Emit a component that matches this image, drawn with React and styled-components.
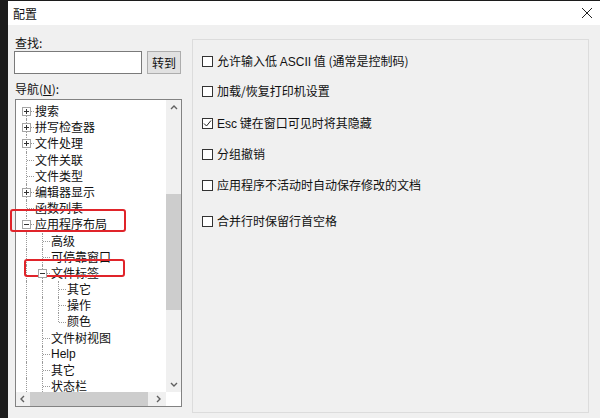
import React from "react";
import styled, { createGlobalStyle } from "styled-components";

const GlobalStyle = createGlobalStyle`
  html, body {
    margin: 0;
    padding: 0;
    background: #1c1c1c;
    overflow: hidden;
  }
  #root {
    width: 600px;
    height: 418px;
  }
`;

const FONT = `"Noto Sans CJK SC", "Noto Sans", sans-serif`;

const Desktop = styled.div`
  display: flex;
  width: 600px;
  height: 418px;
  padding: 1px 0 0 8px;
  box-sizing: border-box;
  background: #1c1c1c;
`;

const Window = styled.div`
  flex: 1;
  display: flex;
  flex-direction: column;
  background: #f0f0f0;
  font-family: ${FONT};
  font-size: 12px;
  color: #111;
  position: relative;
`;

const TitleBar = styled.div`
  height: 24px;
  display: flex;
  align-items: center;
  justify-content: space-between;
  background: #fff;
  padding: 0 6px 0 5px;
  font-size: 12px;
`;

const CloseBtn = styled.div`
  width: 14px;
  height: 14px;
  display: flex;
  align-items: center;
  justify-content: center;
`;

const Body = styled.div`
  flex: 1;
  display: flex;
  gap: 10px;
  padding: 9px 11px 0 6px;
`;

const LeftCol = styled.div`
  width: 168px;
  display: flex;
  flex-direction: column;
`;

const Label = styled.div`
  height: 17px;
  line-height: 17px;
  margin-top: ${(p) => p.$top || 0}px;
  padding-left: 1px;
  u {
    text-decoration: underline;
  }
`;

const SearchRow = styled.div`
  display: flex;
  gap: 5px;
  height: 23px;
`;

const Input = styled.div`
  width: 128px;
  box-sizing: border-box;
  border: 1px solid #7a7a7a;
  background: #fff;
`;

const Button = styled.div`
  width: 34px;
  box-sizing: border-box;
  border: 1px solid #adadad;
  background: #e1e1e1;
  display: flex;
  align-items: center;
  justify-content: center;
`;

const TreeBox = styled.div`
  margin-top: 2px;
  margin-left: 1px;
  height: 308px;
  box-sizing: border-box;
  border: 1px solid #828282;
  background: #fff;
  display: grid;
  grid-template-columns: 1fr 15px;
  grid-template-rows: 1fr 14px;
  overflow: hidden;
`;

const TreeList = styled.div`
  padding: 3px 0 0 2px;
  overflow: hidden;
`;

const TreeRow = styled.div`
  display: flex;
  height: 16.2px;
  line-height: 16.2px;
  white-space: nowrap;
`;

const Guide = styled.div`
  width: 16px;
  height: 100%;
  flex: none;
  position: relative;
  &::before {
    content: "";
    display: ${(p) => (p.$v ? "block" : "none")};
    position: absolute;
    left: 8px;
    top: ${(p) => (p.$v === "bottom" ? "50%" : "0")};
    bottom: ${(p) => (p.$v === "top" ? "50%" : "0")};
    border-left: 1px dotted #9a9a9a;
  }
  &::after {
    content: "";
    display: ${(p) => (p.$h ? "block" : "none")};
    position: absolute;
    left: 9px;
    right: 0;
    top: 50%;
    border-top: 1px dotted #9a9a9a;
  }
`;

const Expander = styled.div`
  position: absolute;
  left: 4px;
  top: 4px;
  width: 9px;
  height: 9px;
  box-sizing: border-box;
  border: 1px solid #a5a5a5;
  background: #fff;
  z-index: 1;
  &::before {
    content: "";
    position: absolute;
    left: 1px;
    right: 1px;
    top: 3px;
    border-top: 1px solid #333;
  }
  &::after {
    content: "";
    display: ${(p) => (p.$open ? "none" : "block")};
    position: absolute;
    top: 1px;
    bottom: 1px;
    left: 3px;
    border-left: 1px solid #333;
  }
`;

const ItemText = styled.span`
  padding-left: 1px;
  font-family: ${(p) => (p.$latin ? `"Liberation Sans", ${FONT}` : FONT)};
`;

const VScroll = styled.div`
  background: #f0f0f0;
  display: flex;
  flex-direction: column;
  align-items: center;
`;

const HScroll = styled.div`
  background: #f0f0f0;
  display: flex;
  align-items: center;
`;

const Corner = styled.div`
  background: #fff;
`;

const Arrow = styled.div`
  width: ${(p) => (p.$h ? "14px" : "15px")};
  height: ${(p) => (p.$h ? "14px" : "15px")};
  flex: none;
  display: flex;
  align-items: center;
  justify-content: center;
`;

const Track = styled.div`
  flex: 1;
  display: flex;
  flex-direction: ${(p) => (p.$h ? "row" : "column")};
  align-self: stretch;
`;

const Thumb = styled.div`
  background: #cdcdcd;
  ${(p) =>
    p.$h
      ? `height: 100%; width: 118px;`
      : `width: 100%; height: 116px; margin-top: 79px;`}
`;

const Group = styled.div`
  flex: 1;
  margin-top: 5px;
  height: 374px;
  box-sizing: border-box;
  border: 1px solid #dcdcdc;
  padding: 12px 0 0 9px;
  display: flex;
  flex-direction: column;
`;

const CheckRow = styled.div`
  display: flex;
  align-items: center;
  gap: 4px;
  height: 18px;
  line-height: 18px;
  margin-top: ${(p) => p.$top}px;
`;

const Box = styled.div`
  width: 11px;
  height: 11px;
  box-sizing: border-box;
  border: 1px solid #333;
  background: #fff;
  display: flex;
  align-items: center;
  justify-content: center;
`;

const CheckText = styled.span`
  font-family: ${FONT};
  .latin {
    font-family: "Liberation Sans", sans-serif;
  }
`;

const Highlight = styled.div`
  position: absolute;
  border: 2px solid #e0242a;
  border-radius: 3px;
  box-sizing: border-box;
  left: ${(p) => p.$x}px;
  top: ${(p) => p.$y}px;
  width: ${(p) => p.$w}px;
  height: ${(p) => p.$h}px;
  pointer-events: none;
`;

const Chevron = ({ dir }) => {
  const d = {
    up: "M1 5 L4 2 L7 5",
    down: "M1 2 L4 5 L7 2",
    left: "M5 1 L2 4 L5 7",
    right: "M2 1 L5 4 L2 7",
  }[dir];
  return (
    <svg width="8" height="8" viewBox="0 0 8 8">
      <path d={d} fill="none" stroke="#606060" strokeWidth="1.4" />
    </svg>
  );
};

// g: guide lines of ancestor levels, v: own vertical connector
const tree = [
  { text: "搜索", g: [], v: "bottom", box: "plus" },
  { text: "拼写检查器", g: [], v: "full", box: "plus" },
  { text: "文件处理", g: [], v: "full", box: "plus" },
  { text: "文件关联", g: [], v: "full" },
  { text: "文件类型", g: [], v: "full" },
  { text: "编辑器显示", g: [], v: "full", box: "plus" },
  { text: "函数列表", g: [], v: "full" },
  { text: "应用程序布局", g: [], v: "full", box: "minus" },
  { text: "高级", g: ["full"], v: "full" },
  { text: "可停靠窗口", g: ["full"], v: "full" },
  { text: "文件标签", g: ["full"], v: "full", box: "minus" },
  { text: "其它", g: ["full", "full"], v: "full" },
  { text: "操作", g: ["full", "full"], v: "full" },
  { text: "颜色", g: ["full", "full"], v: "top" },
  { text: "文件树视图", g: ["full"], v: "full" },
  { text: "Help", g: ["full"], v: "full", latin: true },
  { text: "其它", g: ["full"], v: "full" },
  { text: "状态栏", g: ["full"], v: "full" },
  { text: "", g: ["full"], v: "full" },
];

const options = [
  { top: 0, checked: false, text: <>允许输入低 <span className="latin">ASCII</span> 值 (通常是控制码)</> },
  { top: 12, checked: false, text: "加载/恢复打印机设置" },
  { top: 14, checked: true, text: <><span className="latin">Esc</span> 键在窗口可见时将其隐藏</> },
  { top: 13, checked: false, text: "分组撤销" },
  { top: 13, checked: false, text: "应用程序不活动时自动保存修改的文档" },
  { top: 18, checked: false, text: "合并行时保留行首空格" },
];

export default function App() {
  return (
    <>
      <GlobalStyle />
      <Desktop>
        <Window>
          <TitleBar>
            <span>配置</span>
            <CloseBtn>
              <svg width="12" height="12" viewBox="0 0 12 12">
                <path d="M1 1 L11 11 M11 1 L1 11" stroke="#222" strokeWidth="1" />
              </svg>
            </CloseBtn>
          </TitleBar>
          <Body>
            <LeftCol>
              <Label>查找:</Label>
              <SearchRow>
                <Input />
                <Button>转到</Button>
              </SearchRow>
              <Label $top={6}>
                导航(<u>N</u>):
              </Label>
              <TreeBox>
                <TreeList>
                  {tree.map((item, i) => (
                    <TreeRow key={i}>
                      {item.g.map((g, j) => (
                        <Guide key={j} $v={g} />
                      ))}
                      <Guide $v={item.v} $h={!!item.text}>
                        {item.box && <Expander $open={item.box === "minus"} />}
                      </Guide>
                      <ItemText $latin={item.latin}>{item.text}</ItemText>
                    </TreeRow>
                  ))}
                </TreeList>
                <VScroll>
                  <Arrow>
                    <Chevron dir="up" />
                  </Arrow>
                  <Track>
                    <Thumb />
                  </Track>
                  <Arrow>
                    <Chevron dir="down" />
                  </Arrow>
                </VScroll>
                <HScroll>
                  <Arrow $h>
                    <Chevron dir="left" />
                  </Arrow>
                  <Track $h>
                    <Thumb $h />
                  </Track>
                  <Arrow $h>
                    <Chevron dir="right" />
                  </Arrow>
                </HScroll>
                <Corner />
              </TreeBox>
            </LeftCol>
            <Group>
              {options.map((o, i) => (
                <CheckRow key={i} $top={o.top}>
                  <Box>
                    {o.checked && (
                      <svg width="9" height="9" viewBox="0 0 9 9">
                        <path d="M1 4.5 L3.5 7 L8 1.5" fill="none" stroke="#222" strokeWidth="1" />
                      </svg>
                    )}
                  </Box>
                  <CheckText>{o.text}</CheckText>
                </CheckRow>
              ))}
            </Group>
          </Body>
          <Highlight $x={2} $y={208} $w={116} $h={23} />
          <Highlight $x={16} $y={258} $w={101} $h={18} />
        </Window>
      </Desktop>
    </>
  );
}
